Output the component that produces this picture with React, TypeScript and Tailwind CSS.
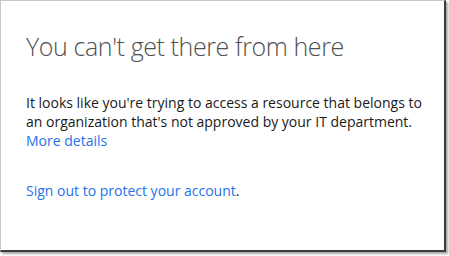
export default function App() {
  return (
    <div className="h-[256px] w-[449px] overflow-hidden bg-white">
      <div className="h-[252px] w-[446px] border-l border-t border-l-[#c8c8c8] border-t-[#c8c8c8] border-r-2 border-b-2 border-r-[#3c3c3c] border-b-[#3c3c3c] bg-white pl-[25px] pt-[28px] shadow-[2px_2px_2px_rgba(0,0,0,0.35)] font-['Open_Sans',sans-serif]">
        <h1 className="text-[25px] font-light leading-[34px] tracking-[-0.4px] text-[#505050]">
          You can't get there from here
        </h1>
        <p className="mt-[30px] w-[405px] text-[14px] leading-[19px] text-[#1a1a1a]">
          It looks like you're trying to access a resource that belongs to an organization that's not approved by your IT department.
          <br />
          <a href="#" className="text-[#2672ec]">More details</a>
        </p>
        <p className="mt-[31px] text-[14px] leading-[19px] text-[#1a1a1a]">
          <a href="#" className="text-[#2672ec]">Sign out to protect your account</a>.
        </p>
      </div>
    </div>
  );
}
